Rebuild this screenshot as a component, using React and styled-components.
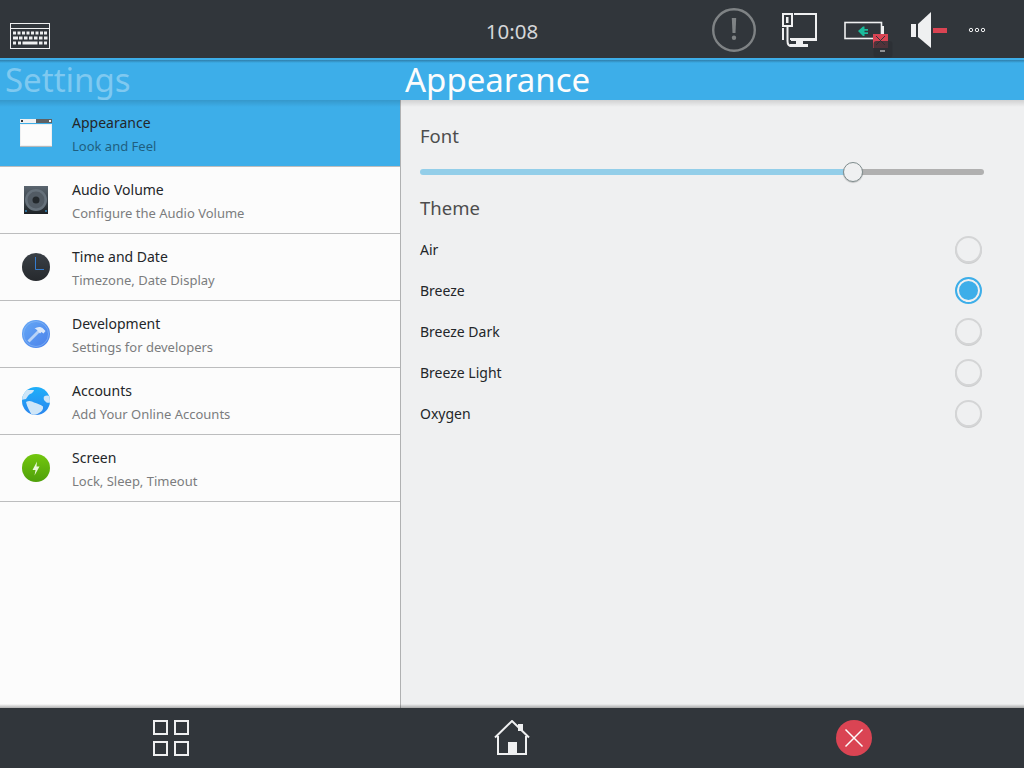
import React from "react";
import styled, { createGlobalStyle } from "styled-components";

const Global = createGlobalStyle`
  html, body { margin: 0; padding: 0; height: 100%; overflow: hidden; }
  body { font-family: "Noto Sans", sans-serif; background: #31363b; }
  * { box-sizing: border-box; }
`;

const Page = styled.div`
  width: 1024px;
  height: 768px;
  display: flex;
  flex-direction: column;
`;

const TopBar = styled.div`
  height: 58px;
  background: #31363b;
  display: grid;
  grid-template-columns: 1fr auto 1fr;
  align-items: center;
`;

const Clock = styled.div`
  color: #d5d7d9;
  font-size: 20.5px;
  line-height: 58px;
  padding-top: 2px;
`;

const Tray = styled.div`
  display: flex;
  align-items: center;
  justify-content: flex-end;
  padding-right: 38px;
`;

const TraySlot = styled.div`
  width: ${p => p.w}px;
  display: flex;
  justify-content: flex-start;
  align-items: center;
`;

const KeyboardSlot = styled.div`
  display: flex;
  padding: 11px 0 0 10px;
`;

const Header = styled.div`
  height: 42px;
  background: #3daee9;
  border-top: 2px solid #3daee9;
  display: grid;
  grid-template-columns: 405px 1fr;
  position: relative;
  &::before {
    content: "";
    position: absolute;
    left: 0;
    right: 0;
    top: 0;
    height: 3px;
    background: linear-gradient(#2f7fab, #3daee9);
  }
`;

const Title = styled.div`
  font-size: 33px;
  line-height: 40px;
  padding-left: ${p => (p.dim ? 5 : 0)}px;
  color: ${p => (p.dim ? "rgba(255,255,255,0.35)" : "#fcfcfc")};
  white-space: nowrap;
  position: relative;
`;

const Body = styled.div`
  flex: 1;
  display: grid;
  grid-template-columns: 401px 1fr;
  min-height: 0;
  position: relative;
  &::before {
    content: "";
    position: absolute;
    left: 0;
    right: 0;
    top: 0;
    height: 7px;
    background: linear-gradient(rgba(0,0,0,0.13), rgba(0,0,0,0));
  }
  &::after {
    content: "";
    position: absolute;
    left: 0;
    right: 0;
    bottom: 0;
    height: 4px;
    background: linear-gradient(rgba(0,0,0,0), rgba(0,0,0,0.3));
  }
`;

const Sidebar = styled.div`
  background: #fcfcfc;
  border-right: 1px solid #b0b1b2;
`;

const Row = styled.div`
  height: 67px;
  display: flex;
  align-items: center;
  background: ${p => (p.active ? "#3daee9" : "#fcfcfc")};
  border-bottom: 1px solid #bcbdbe;
`;

const RowIcon = styled.div`
  width: 72px;
  flex: none;
  display: flex;
  justify-content: center;
`;

const RowText = styled.div`
  display: flex;
  flex-direction: column;
  gap: 5px;
  padding-top: 2px;
`;

const RowTitle = styled.div`
  font-size: 14px;
  line-height: 19px;
  color: #232629;
`;

const RowSub = styled.div`
  font-size: 13px;
  line-height: 18px;
  color: ${p => (p.active ? "#1f5f80" : "#7b7c7e")};
`;

const Panel = styled.div`
  background: #eff0f1;
  padding: 21px 40px 0 19px;
`;

const Heading = styled.div`
  font-size: 18.5px;
  line-height: 30px;
  color: #4d4d4d;
  margin-top: ${p => p.gap || 0}px;
`;

const Slider = styled.div`
  height: 26px;
  margin-top: 8px;
  display: flex;
  align-items: center;
  position: relative;
`;

const SliderFill = styled.div`
  height: 6px;
  width: 432px;
  background: #93cee9;
  border-radius: 3px 0 0 3px;
`;

const SliderRest = styled.div`
  height: 6px;
  flex: 1;
  background: #b0b0b0;
  border-radius: 0 3px 3px 0;
`;

const Thumb = styled.div`
  position: absolute;
  left: 423px;
  top: 3px;
  width: 20px;
  height: 20px;
  border-radius: 50%;
  background: #eff0f1;
  border: 1px solid #7f8c8d;
  box-shadow: 0 1px 1px rgba(0,0,0,0.2);
`;

const ThemeList = styled.div`
  margin-top: 6px;
`;

const ThemeRow = styled.div`
  height: 41px;
  display: flex;
  align-items: center;
  justify-content: space-between;
  font-size: 14px;
  color: #232629;
  padding-right: 2px;
`;

const Radio = styled.div`
  width: 27px;
  height: 27px;
  margin-top: ${p => (p.on ? 0 : -1)}px;
  border-radius: 50%;
  background: ${p => (p.on ? "#3daee9" : "#eff0f1")};
  border: 2px solid ${p => (p.on ? "#3daee9" : "#d4d5d6")};
  box-shadow: ${p => (p.on ? "inset 0 0 0 2px #eff0f1" : "0 1px 0 rgba(0,0,0,0.14)")};
`;

const BottomBar = styled.div`
  height: 60px;
  background: #31363b;
  display: grid;
  grid-template-columns: repeat(3, 341.33px);
  align-items: center;
  justify-items: center;
`;

const BottomSlot = styled.div`
  display: flex;
  padding-left: ${p => p.nudge || 0}px;
`;

const Keyboard = () => (
  <svg width="40" height="26" viewBox="0 0 40 26">
    <rect x="0.5" y="0.5" width="39" height="25" fill="none" stroke="#eff0f1" />
    <rect x="1" y="5" width="38" height="1" fill="#eff0f1" />
    <g fill="#eff0f1">
      {[3, 7.5, 12, 16.5, 21, 25.5, 30, 34].map(x => <rect key={x} x={x} y="8.5" width="3" height="3" />)}
      {[3, 9, 14, 19, 24, 29, 34].map(x => <rect key={x} x={x} y="13.5" width={x === 3 ? 5 : 3.5} height="3" />)}
      <rect x="3" y="18.5" width="3" height="3" />
      <rect x="8" y="18.5" width="3" height="3" />
      <rect x="12.5" y="18.5" width="15" height="3" />
      <rect x="29" y="18.5" width="3.5" height="3" />
      <rect x="34" y="18.5" width="3" height="3" />
    </g>
  </svg>
);

const Notice = () => (
  <svg width="44" height="44" viewBox="0 0 44 44">
    <circle cx="22" cy="22" r="20.8" fill="none" stroke="#7f8385" strokeWidth="2.4" />
    <path d="M19.800 10h4.400l-.7 15h-3z" fill="#7f8385" />
    <circle cx="22" cy="29.800" r="2.200" fill="#7f8385" />
  </svg>
);

const Network = () => (
  <svg width="36" height="36" viewBox="0 0 36 36">
    <g fill="none" stroke="#eff0f1" strokeWidth="2">
      <path d="M13 2h22v25H9" />
      <rect x="2" y="2" width="9" height="12" />
      <path d="M6.500 14v15c0 3 1 5 4 5h3" />
    </g>
    <rect x="5" y="5" width="2.500" height="6" fill="#eff0f1" />
    <rect x="1" y="16" width="2" height="12" fill="#eff0f1" />
    <path d="M10 26h26v3H22v3h5v3H9v-3h6v-3h-5z" fill="#eff0f1" />
  </svg>
);

const Battery = () => (
  <svg width="46" height="36" viewBox="0 0 46 36" overflow="visible">
    <rect x="1" y="10.500" width="36.500" height="16" fill="none" stroke="#eff0f1" strokeWidth="1.600" />
    <rect x="38" y="14" width="2" height="8" fill="#eff0f1" />
    <path d="M14 19l5-4.500h1.500v2.500h3.500v1.700h-3.500v1.500h3.500v1.700h-3.500v2.100H19z" fill="#1abc9c" />
    <rect x="29" y="22" width="15" height="14" fill="#da4453" />
    <path d="M32 24l9 9M41 24l-9 9" stroke="#31363b" strokeWidth="1" />
    <rect x="29.500" y="29" width="19" height="16.500" rx="3" fill="#2c3035" fillOpacity="0.8" />
    <rect x="36" y="38.500" width="5" height="1" fill="#eff0f1" />
  </svg>
);

const Volume = () => (
  <svg width="36" height="38" viewBox="0 0 36 38">
    <rect x="0" y="13" width="5" height="13" fill="#eff0f1" />
    <path d="M7 13L20 1v36L7 26z" fill="#eff0f1" />
    <rect x="22" y="17" width="14" height="5" fill="#da4453" />
  </svg>
);

const More = () => (
  <svg width="18" height="8" viewBox="0 0 18 8">
    <g fill="none" stroke="#eff0f1" strokeWidth="1">
      <circle cx="3" cy="4" r="1.700" />
      <circle cx="9" cy="4" r="1.700" />
      <circle cx="15" cy="4" r="1.700" />
    </g>
  </svg>
);

const WindowIcon = () => (
  <svg width="32" height="28" viewBox="0 0 32 28">
    <rect width="32" height="4" fill="#5f6163" />
    <rect width="16" height="4" fill="#eff0f1" />
    <rect x="1" y="1" width="2" height="2" fill="#31363b" />
    <rect x="29" y="1" width="2" height="2" fill="#eff0f1" />
    <rect y="5" width="32" height="22" fill="#eff0f1" />
    <rect x="1" y="6" width="30" height="20" fill="#fcfcfc" />
    <rect y="27" width="32" height="1" fill="#b5b8ba" />
  </svg>
);

const SpeakerIcon = () => (
  <svg width="24" height="28" viewBox="0 0 24 28">
    <defs>
      <linearGradient id="spk" x1="0" y1="0" x2="0" y2="1">
        <stop offset="0" stopColor="#5b6670" />
        <stop offset="1" stopColor="#1d2226" />
      </linearGradient>
    </defs>
    <rect width="24" height="28" fill="url(#spk)" />
    <circle cx="12" cy="14" r="11" fill="#66717b" />
    <circle cx="12" cy="14" r="8.500" fill="#525b64" />
    <circle cx="12" cy="14" r="3.500" fill="#23282c" />
    <rect x="1" y="24" width="2" height="2" fill="#2f6f97" />
    <rect x="21" y="24" width="2" height="2" fill="#2f6f97" />
  </svg>
);

const ClockIcon = () => (
  <svg width="28" height="28" viewBox="0 0 28 28">
    <defs>
      <linearGradient id="clk" x1="0" y1="0" x2="0" y2="1">
        <stop offset="0" stopColor="#3a4046" />
        <stop offset="1" stopColor="#26292d" />
      </linearGradient>
    </defs>
    <circle cx="14" cy="14" r="14" fill="url(#clk)" />
    <path d="M13.500 4v12.500H22" fill="none" stroke="#3584e0" strokeWidth="0.900" />
  </svg>
);

const HammerIcon = () => (
  <svg width="28" height="28" viewBox="0 0 28 28">
    <defs>
      <linearGradient id="dev" x1="0" y1="0" x2="1" y2="1">
        <stop offset="0" stopColor="#66a9f6" />
        <stop offset="1" stopColor="#4a80ea" />
      </linearGradient>
    </defs>
    <circle cx="14" cy="14" r="14" fill="url(#dev)" />
    <circle cx="14" cy="14" r="12.500" fill="none" stroke="#8fbdf6" strokeWidth="0.600" />
    <path d="M5.500 20.500L16 10l2 2L7.500 22.500z" fill="#b9d3f6" />
    <path d="M12.500 8.500c3-2 6.500-2 8.500 0l2.500 2.500-2 2.500-2-1.500-1.500 1.500-3-3.500c-1-.8-1.500-1.200-2.500-1.500z" fill="#dbe8fa" />
  </svg>
);

const GlobeIcon = () => (
  <svg width="28" height="28" viewBox="0 0 28 28">
    <defs>
      <linearGradient id="glb" x1="0" y1="0" x2="0" y2="1">
        <stop offset="0" stopColor="#1fb0fa" />
        <stop offset="1" stopColor="#2a86ee" />
      </linearGradient>
      <clipPath id="glc">
        <circle cx="14" cy="14" r="14" />
      </clipPath>
    </defs>
    <circle cx="14" cy="14" r="14" fill="url(#glb)" />
    <g clipPath="url(#glc)" fill="#cfe6f8">
      <path d="M2 3h10c-.5 2-2 3.500-4 4-2 1-2.500 3-4 5l-5 1V6z" />
      <path d="M4 15c3-2 6-1 8 .5 3 1 7 2 9 4 .5 3-1 5-4 6.500-3 2-5 2-7 2-2-3-5-8-6-13z" />
      <path d="M22 9.500c2-1.500 5-1 7 0v6c-2 .5-5 .5-6-1.500-1.500-1.500-1.500-3-1-4.500z" />
    </g>
  </svg>
);

const BoltIcon = () => (
  <svg width="28" height="28" viewBox="0 0 28 28">
    <defs>
      <linearGradient id="scr" x1="0" y1="0" x2="0" y2="1">
        <stop offset="0" stopColor="#73c70e" />
        <stop offset="1" stopColor="#4fa00a" />
      </linearGradient>
    </defs>
    <circle cx="14" cy="14" r="14" fill="url(#scr)" />
    <path d="M15 7.500L10.500 16h3L12.500 21.500 17.500 12.500h-3z" fill="#eaf8dc" />
  </svg>
);

const GridIcon = () => (
  <svg width="36" height="36" viewBox="0 0 36 36">
    <g fill="none" stroke="#eff0f1" strokeWidth="2">
      <rect x="1" y="1" width="13" height="13" />
      <rect x="22" y="1" width="13" height="13" />
      <rect x="1" y="22" width="13" height="13" />
      <rect x="22" y="22" width="13" height="13" />
    </g>
  </svg>
);

const HomeIcon = () => (
  <svg width="36" height="36" viewBox="0 0 36 36">
    <path d="M1 17.500L18 1l17 16.500" fill="none" stroke="#eff0f1" strokeWidth="2" />
    <path d="M4 16v18h28V16" fill="none" stroke="#eff0f1" strokeWidth="2" />
    <rect x="24" y="4" width="5" height="7" fill="#eff0f1" />
    <rect x="14" y="22" width="9" height="12" fill="#eff0f1" />
  </svg>
);

const CloseIcon = () => (
  <svg width="36" height="36" viewBox="0 0 36 36">
    <circle cx="18" cy="18" r="18" fill="#da4453" />
    <path d="M9.500 9.500l17 17M26.500 9.500l-17 17" stroke="#fcfcfc" strokeWidth="1.500" />
  </svg>
);

const modules = [
  { title: "Appearance", sub: "Look and Feel", icon: <WindowIcon />, active: true },
  { title: "Audio Volume", sub: "Configure the Audio Volume", icon: <SpeakerIcon /> },
  { title: "Time and Date", sub: "Timezone, Date Display", icon: <ClockIcon /> },
  { title: "Development", sub: "Settings for developers", icon: <HammerIcon /> },
  { title: "Accounts", sub: "Add Your Online Accounts", icon: <GlobeIcon /> },
  { title: "Screen", sub: "Lock, Sleep, Timeout", icon: <BoltIcon /> },
];

const themes = ["Air", "Breeze", "Breeze Dark", "Breeze Light", "Oxygen"];

const App = () => (
  <Page>
    <Global />
    <TopBar>
      <KeyboardSlot>
        <Keyboard />
      </KeyboardSlot>
      <Clock>10:08</Clock>
      <Tray>
        <TraySlot w={69}><Notice /></TraySlot>
        <TraySlot w={63}><Network /></TraySlot>
        <TraySlot w={67}><Battery /></TraySlot>
        <TraySlot w={57}><Volume /></TraySlot>
        <TraySlot w={18}><More /></TraySlot>
      </Tray>
    </TopBar>
    <Header>
      <Title dim>Settings</Title>
      <Title>Appearance</Title>
    </Header>
    <Body>
      <Sidebar>
        {modules.map(m => (
          <Row key={m.title} active={m.active}>
            <RowIcon>{m.icon}</RowIcon>
            <RowText>
              <RowTitle>{m.title}</RowTitle>
              <RowSub active={m.active}>{m.sub}</RowSub>
            </RowText>
          </Row>
        ))}
      </Sidebar>
      <Panel>
        <Heading>Font</Heading>
        <Slider>
          <SliderFill />
          <SliderRest />
          <Thumb />
        </Slider>
        <Heading gap={8}>Theme</Heading>
        <ThemeList>
          {themes.map(t => (
            <ThemeRow key={t}>
              {t}
              <Radio on={t === "Breeze"} />
            </ThemeRow>
          ))}
        </ThemeList>
      </Panel>
    </Body>
    <BottomBar>
      <BottomSlot><GridIcon /></BottomSlot>
      <BottomSlot><HomeIcon /></BottomSlot>
      <BottomSlot nudge={1}><CloseIcon /></BottomSlot>
    </BottomBar>
  </Page>
);

export default App;
